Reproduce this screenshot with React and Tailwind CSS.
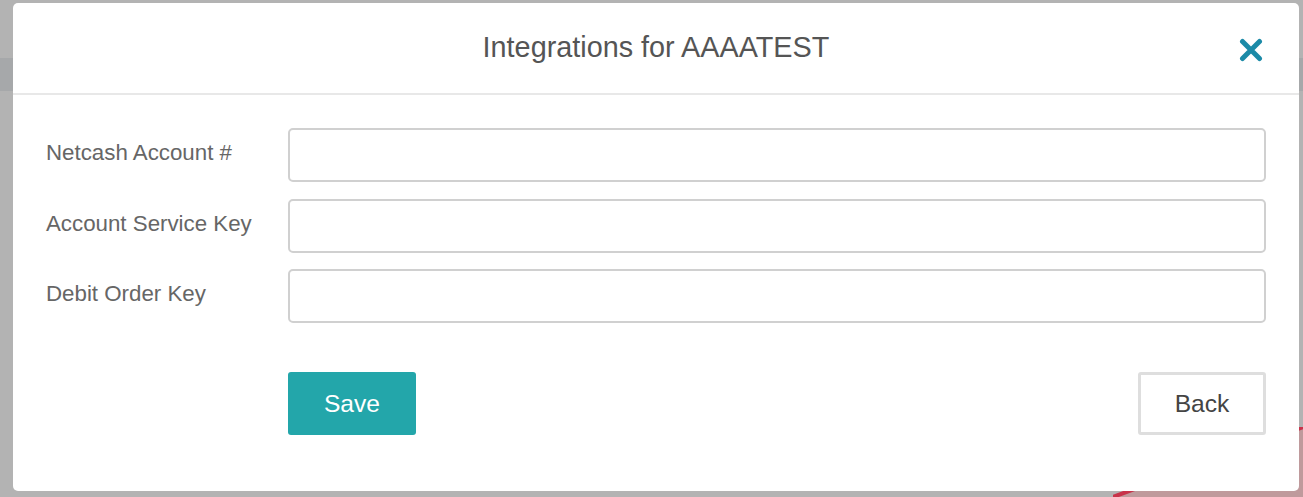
export default function App() {
  const fields = [
    { label: 'Netcash Account #', mt: 'mt-0' },
    { label: 'Account Service Key', mt: 'mt-[17px]' },
    { label: 'Debit Order Key', mt: 'mt-[16px]' },
  ];

  return (
    <div className="relative w-full h-[497px] overflow-hidden bg-[#b3b3b3] pt-[3px] pl-[13px] font-['Liberation_Sans',Arial,sans-serif]">
      {/* page behind the overlay */}
      <div className="absolute left-0 top-[58px] w-full h-[33px] bg-[#a6a8aa]" />
      <svg className="absolute right-0 bottom-0" width="190" height="70" viewBox="0 0 190 70">
        <path d="M0 70 L190 0 L190 70 Z" fill="#bf9a9c" />
        <path d="M0 70 L190 0" stroke="#c8334a" strokeWidth="4" />
      </svg>

      {/* Modal */}
      <div className="relative w-[1286px] h-[488px] bg-white rounded-[5px] flex flex-col">
        <div className="relative h-[92px] flex items-center justify-center border-b-2 border-[#e8e8e8]">
          <h2 className="text-[28.8px] text-[#555] leading-none pb-[2px]">Integrations for AAAATEST</h2>
          <button className="absolute right-[36px] top-[35px] w-[24px] h-[24px]">
            <svg width="24" height="24" viewBox="0 0 24 24">
              <path d="M3.5 3.5 L20.5 20.5 M20.5 3.5 L3.5 20.5" stroke="#1b8aa7" strokeWidth="5" strokeLinecap="round" />
            </svg>
          </button>
        </div>

        <div className="pt-[33px] pl-[33px] pr-[33px]">
          {fields.map((f) => (
            <div key={f.label} className={`flex items-center ${f.mt}`}>
              <label className="w-[242px] text-[22.3px] text-[#666] pb-[4px]">{f.label}</label>
              <input
                type="text"
                className="flex-1 h-[54px] border-2 border-[#d0d0d0] rounded-[5px] bg-white outline-none"
              />
            </div>
          ))}

          <div className="flex justify-between pl-[242px] mt-[49px]">
            <button className="w-[128px] h-[63px] pt-[2px] rounded-[3px] bg-[#23a6aa] text-white text-[24.6px]">
              Save
            </button>
            <button className="w-[128px] h-[63px] pt-[2px] rounded-[3px] border-[3px] border-[#dedede] bg-white text-[#444] text-[24.6px]">
              Back
            </button>
          </div>
        </div>
      </div>
    </div>
  );
}
